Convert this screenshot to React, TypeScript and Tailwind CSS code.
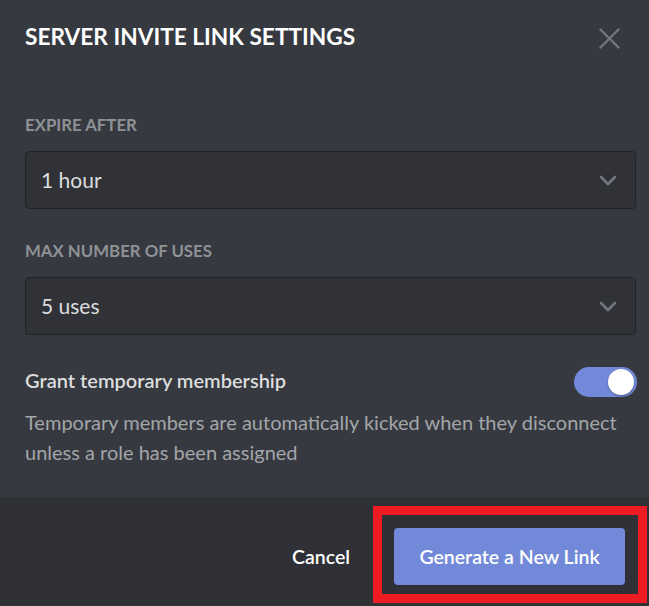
import React from "react";

function Chevron() {
  return (
    <svg width="18" height="11" viewBox="0 0 18 11" fill="none">
      <path d="M2 2 L9 9 L16 2" stroke="#72767d" strokeWidth="2.6" strokeLinecap="round" strokeLinejoin="round" />
    </svg>
  );
}

function Select({ value }: { value: string }) {
  return (
    <div className="flex h-[58px] items-center justify-between rounded-[4px] border border-[#222327] bg-[#303238] pl-[15px] pr-[18px]">
      <span className="text-[21px] leading-[28px] text-[#dcddde]">{value}</span>
      <Chevron />
    </div>
  );
}

export default function App() {
  return (
    <div
      className="flex h-[606px] w-[649px] flex-col bg-[#36393f]"
      style={{ fontFamily: "Lato, 'Open Sans', sans-serif" }}
    >
      <div className="flex-1 pl-[25px] pr-[13px]">
        <div className="flex items-start justify-between pt-[23px]">
          <h1 className="text-[22.7px] font-bold uppercase leading-[28px] text-white">
            Server Invite Link Settings
          </h1>
          <svg className="mr-[16px] mt-[5px]" width="21" height="21" viewBox="0 0 21 21" fill="none">
            <path d="M1.5 1.5 L19.5 19.5 M19.5 1.5 L1.5 19.5" stroke="#72767d" strokeWidth="2.4" strokeLinecap="round" />
          </svg>
        </div>

        <div className="mt-[64px] text-[16.8px] font-bold uppercase leading-[20px] text-[#8e9297]">
          Expire After
        </div>
        <div className="mt-[16px]">
          <Select value="1 hour" />
        </div>

        <div className="mt-[32px] text-[16.8px] font-bold uppercase leading-[20px] text-[#8e9297]">
          Max Number of Uses
        </div>
        <div className="mt-[16px]">
          <Select value="5 uses" />
        </div>

        <div className="mt-[32px] flex items-center justify-between">
          <span className="mb-[5px] text-[20px] font-semibold leading-[24px] text-[#dcddde]">
            Grant temporary membership
          </span>
          <div className="relative mr-[-1px] h-[30px] w-[63px] rounded-full bg-[#7289da]">
            <div className="absolute right-[3px] top-[2px] h-[26px] w-[26px] rounded-full bg-white shadow-[0_1px_2px_rgba(0,0,0,0.35)]" />
          </div>
        </div>
        <p className="mt-[10px] text-[20px] leading-[30px] text-[#a3a6aa]">
          Temporary members are automatically kicked when they disconnect unless a role has been assigned
        </p>
      </div>

      <div className="flex h-[109px] items-start justify-end bg-[#2f3136] pr-[2px] pt-[9px]">
        <div className="mr-[23px] mt-[22px] flex h-[57px] items-center text-[19.5px] font-semibold text-white">
          Cancel
        </div>
        <div className="border-[9px] border-[#ed1c24] pb-[9px] pl-[12px] pr-[13px] pt-[13px]">
          <div className="flex h-[57px] w-[231px] items-center justify-center rounded-[4px] bg-[#7289da] text-[19.5px] font-semibold text-white">
            Generate a New Link
          </div>
        </div>
      </div>
    </div>
  );
}
